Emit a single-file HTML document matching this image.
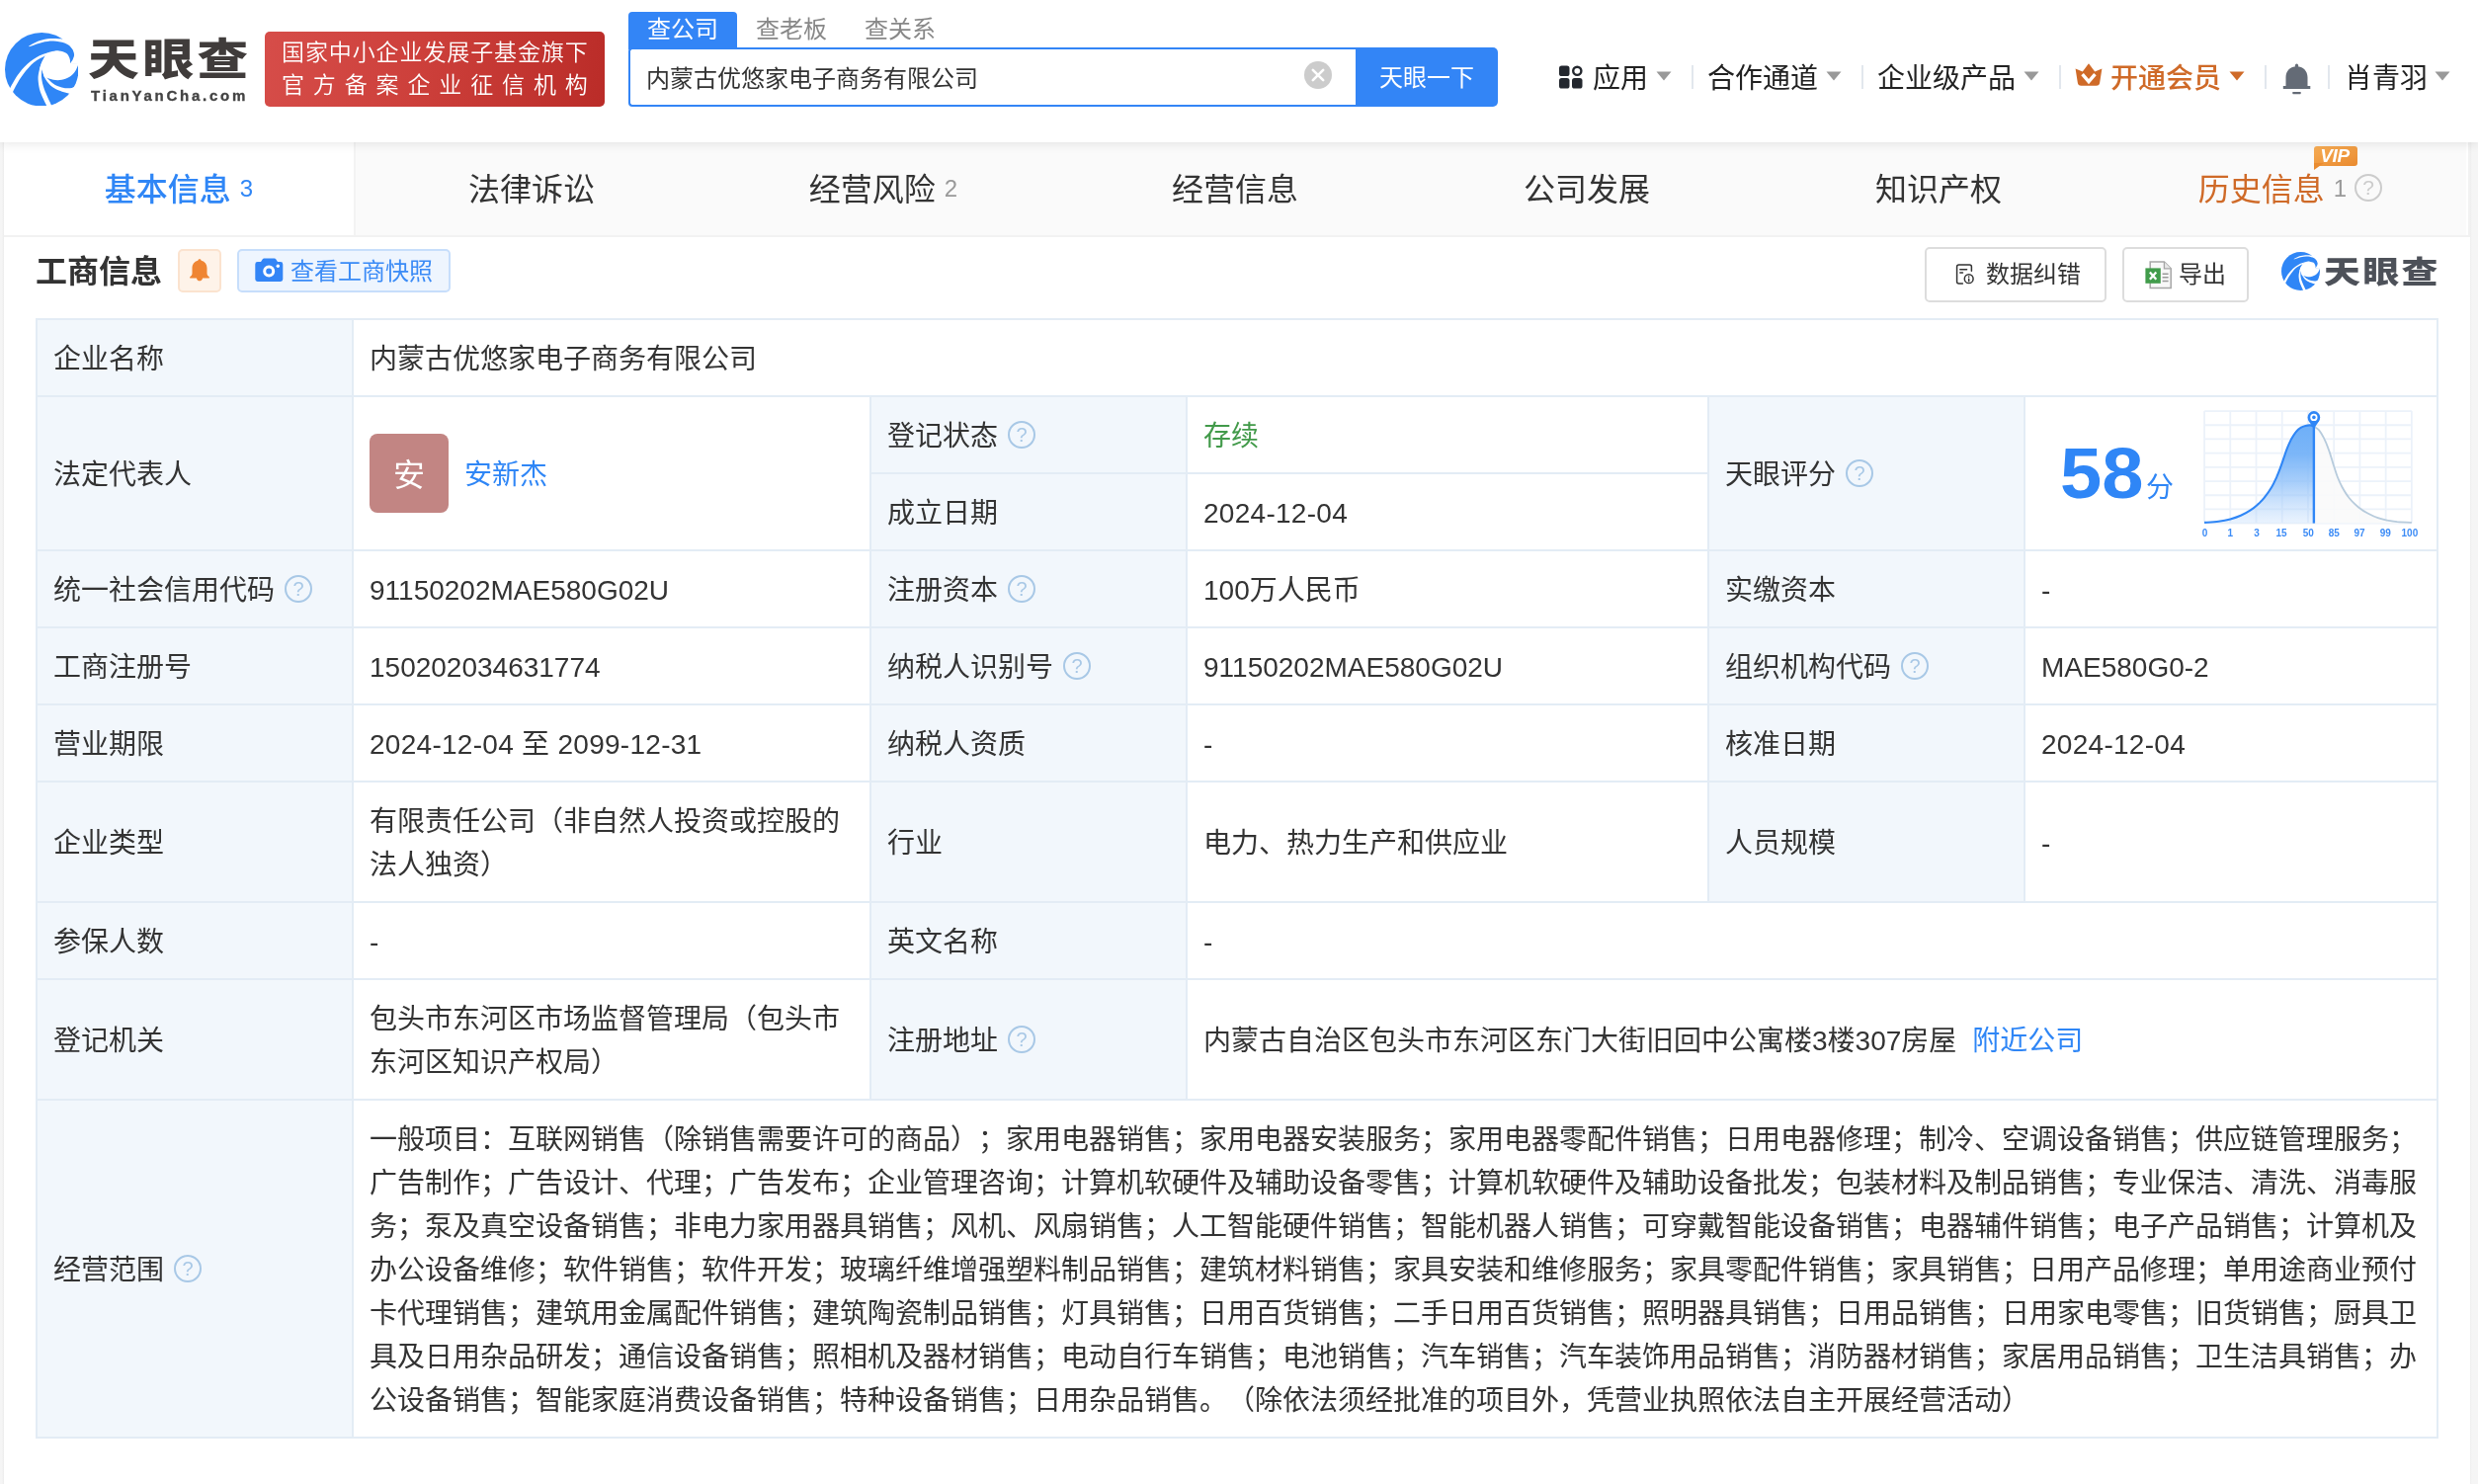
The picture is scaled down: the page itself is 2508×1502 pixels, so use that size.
<!DOCTYPE html>
<html lang="zh-CN">
<head>
<meta charset="utf-8">
<title>内蒙古优悠家电子商务有限公司 - 天眼查</title>
<style>
*{box-sizing:border-box;margin:0;padding:0}
html,body{width:2508px;height:1502px;overflow:hidden;background:#f3f3f3}
body{font-family:"Liberation Sans","Noto Sans CJK SC",sans-serif;color:#333;font-size:28px;text-spacing-trim:space-all;-webkit-font-smoothing:antialiased}
.abs{position:absolute}
#page{will-change:transform;position:relative;width:2508px;height:1502px;overflow:hidden;background:linear-gradient(90deg,#f5f5f5 0,#f5f5f5 2px,#ececec 4px,#fff 4px,#fff 2500px,#eee 2500px,#f5f5f5 2502px,#f5f5f5 100%)}
/* header */
#hdr{position:absolute;left:0;top:0;width:2508px;height:144px;background:#fff;box-shadow:0 2px 10px rgba(0,0,0,.09);z-index:5}
.t{position:absolute;white-space:nowrap;line-height:1}
/* tab bar */
#tabs{position:absolute;left:4px;top:144px;width:2496px;height:96px;background:linear-gradient(90deg,#fafafa 0,#fafafa 2492px,#fff 2492px,#fff 2494px,#f2f2f2 2494px);border-bottom:2px solid #f2f2f2}
#tabs .tab{position:absolute;top:0;height:94px;width:356px;text-align:center;font-size:32px;line-height:96px;color:#333;white-space:nowrap}
#tabs .tab .n{font-size:24px;color:#999;margin-left:9px;position:relative;top:-4px}
#tabs .on{background:#fff;color:#2f86f6;font-weight:500;border-right:2px solid #f3f3f3;height:94px}
#tabs .on .n{color:#2f86f6;font-weight:400}
/* table */
table{position:absolute;left:36px;top:322px;width:2430px;border-collapse:collapse;table-layout:fixed}
td{border:2px solid #e3ecf5;padding:18px 16px 14px;line-height:44px;font-size:28px;vertical-align:middle;color:#333;background:#fff;word-break:break-all}
td.l{background:#f2f7fc;white-space:nowrap}
.q{display:inline-block;width:28px;height:28px;border:2px solid #a8c8e6;border-radius:50%;color:#a8c8e6;font-size:20px;line-height:24px;text-align:center;vertical-align:middle;margin-left:10px;position:relative;top:-4px;font-style:normal;font-family:"Liberation Sans",sans-serif}
a{color:#2f86f6;text-decoration:none}
.nv{top:65px;font-size:28px;line-height:30px;color:#222}
.car{top:72px;width:16px;height:10px}
.sep{top:66px;width:2px;height:24px;background:#e2e7ed}
.q2{display:inline-block;width:28px;height:28px;border:2px solid #ccc;border-radius:50%;color:#ccc;font-size:21px;line-height:24px;text-align:center;vertical-align:middle;margin-left:8px;position:relative;top:-5px;font-weight:400}
.av{display:inline-block;width:80px;height:80px;border-radius:8px;background:#c28583;color:#fff;font-size:32px;line-height:84px;text-align:center;vertical-align:middle;overflow:hidden}
.avn{display:inline-block;vertical-align:middle;margin-left:16px;position:relative;top:2px}
.d{letter-spacing:.28px}
</style>
</head>
<body>
<div id="page">
<svg width="0" height="0" style="position:absolute">
 <defs>
  <symbol id="lg" viewBox="0 0 74.5 74.5">
<circle cx="37.25" cy="37.25" r="37.25" fill="#2f86f6"/>
<g fill="#fff">
<path d="M24.2,13.6C25.9,12.8 31.2,9.6 34.8,8.3C38.5,7.1 42.2,6.4 46.1,6.1C50.0,5.8 56.1,6.4 58.1,6.5L63.1,3.7C65.7,4.2 75.8,1.7 78.4,6.5C80.9,11.3 78.4,28.3 78.4,32.7L66.2,31.0C66.6,30.3 68.1,28.4 68.8,26.9C69.4,25.4 70.3,23.8 70.0,21.8C69.8,19.8 69.0,16.9 67.4,15.0C65.7,13.1 63.3,11.7 60.3,10.6C57.2,9.5 52.7,8.7 49.0,8.6C45.2,8.5 41.7,9.1 37.6,10.0C33.6,11.0 26.7,13.6 24.5,14.3Z"/>
<path d="M40.8,23.0C41.7,22.5 43.8,20.4 46.1,19.6C48.4,18.9 52.0,18.2 54.6,18.4C57.3,18.6 60.2,19.4 62.0,20.7C63.8,21.9 64.7,24.0 65.4,25.8C66.1,27.5 66.1,30.1 66.2,31.0L78.4,31.4C78.4,31.7 78.4,32.7 78.4,33.0L74.0,33.0C73.5,34.1 72.4,37.4 71.0,39.3C69.7,41.2 68.2,43.0 65.9,44.4C63.7,45.8 60.3,47.3 57.5,47.8C54.6,48.4 51.4,48.2 49.0,47.8C46.5,47.5 43.7,46.2 42.6,45.8L39.9,45.1C39.5,43.8 38.2,38.8 37.3,37.5C36.5,36.3 35.2,37.6 34.8,37.6L34.8,37.6C35.2,36.4 36.1,32.7 37.1,30.3C38.1,27.8 40.2,24.2 40.8,23.0Z"/>
<path d="M37.4,29.7C36.8,31.5 34.9,37.3 34.2,40.5C33.6,43.7 33.4,45.7 33.7,49.0C34.0,52.3 34.5,55.9 35.9,60.3C37.4,64.6 41.5,72.5 42.6,75.0L47.4,74.1C46.1,71.4 41.6,62.1 39.9,57.5C38.2,52.8 37.5,49.5 37.1,46.1C36.7,42.7 37.1,39.9 37.6,37.1C38.2,34.2 40.0,30.5 40.5,29.2Z"/>
<path d="M42.6,45.8C43.7,46.8 46.5,50.2 49.0,51.8C51.4,53.4 54.6,54.7 57.5,55.5C60.3,56.2 63.6,56.5 65.9,56.3C68.3,56.1 70.8,54.7 71.7,54.3L67.5,62.4C65.4,61.8 58.2,60.1 54.6,58.6C51.1,57.1 48.6,55.8 46.1,53.5C43.7,51.2 41.3,47.7 39.9,45.0C38.5,42.3 38.0,38.4 37.6,37.1Z"/>
<path d="M4.6,57.5C5.9,55.1 9.5,47.9 12.5,43.6C15.5,39.4 18.9,35.2 22.7,31.8C26.5,28.4 31.2,25.3 35.1,23.3C39.0,21.2 44.3,20.1 46.1,19.4L41.2,23.2C39.2,24.3 32.8,27.2 29.2,30.3C25.5,33.4 21.9,37.8 19.0,41.6C16.0,45.4 13.6,49.5 11.6,52.9C9.6,56.3 7.8,60.5 7.1,62.0Z"/>
</g>
</symbol>
  <symbol id="car" viewBox="0 0 16 10"><path d="M0.5,0.5 L15.5,0.5 L8,9.5Z"/></symbol>
 </defs>
</svg>
<div id="hdr">
 <svg class="abs" style="left:4.8px;top:32.8px" width="74.5" height="74.5"><use href="#lg"/></svg>
 <div class="t" id="lgtxt" style="left:89px;top:39px;font-size:44px;font-weight:900;color:#403c3b;letter-spacing:3px;transform:scaleX(1.175);transform-origin:0 0">天眼查</div>
 <div class="t" id="lgurl" style="left:92px;top:89px;font-size:15px;font-weight:700;color:#444;letter-spacing:2.75px;-webkit-text-stroke:.35px #444">TianYanCha.com</div>
 <div class="abs" style="left:268px;top:32px;width:344px;height:76px;border-radius:5px;background:linear-gradient(100deg,#d64d49 0%,#cd403b 45%,#ba2c28 100%)">
  <div class="t" style="left:17px;top:7px;font-size:23px;line-height:28px;color:#fff;letter-spacing:.9px;font-weight:350">国家中小企业发展子基金旗下</div>
  <div class="t" style="left:17px;top:40px;font-size:23px;line-height:28px;color:#fff;letter-spacing:8.87px;font-weight:350">官方备案企业征信机构</div>
 </div>
 <!-- search tabs -->
 <div class="abs" style="left:636px;top:12px;width:110px;height:38px;background:#3385f6;border-radius:4px 4px 0 0"></div>
 <div class="t" style="left:636px;top:16px;width:110px;text-align:center;font-size:24px;line-height:28px;color:#fff">查公司</div>
 <div class="t" style="left:746px;top:16px;width:110px;text-align:center;font-size:24px;line-height:28px;color:#888">查老板</div>
 <div class="t" style="left:856px;top:16px;width:110px;text-align:center;font-size:24px;line-height:28px;color:#888">查关系</div>
 <!-- search box -->
 <div class="abs" style="left:636px;top:48px;width:740px;height:60px;border:2px solid #3385f6;border-right:0;border-radius:4px 0 0 4px;background:#fff"></div>
 <div class="t" style="left:654px;top:65px;font-size:24px;line-height:30px;color:#333">内蒙古优悠家电子商务有限公司</div>
 <svg class="abs" style="left:1320px;top:62px" width="28" height="28" viewBox="0 0 28 28"><circle cx="14" cy="14" r="14" fill="#ccc"/><path d="M8.8,8.8 L19.2,19.2 M19.2,8.8 L8.8,19.2" stroke="#fff" stroke-width="2.6" stroke-linecap="round"/></svg>
 <div class="abs" style="left:1372px;top:48px;width:144px;height:60px;background:#3385f6;border-radius:0 5px 5px 0"></div>
 <div class="t" style="left:1372px;top:64px;width:144px;text-align:center;font-size:24px;line-height:30px;color:#fff">天眼一下</div>
 <!-- nav -->
 <svg class="abs" style="left:1578px;top:66px" width="24" height="24" viewBox="0 0 24 24"><g fill="#23272e"><rect x="0" y="0.5" width="10.5" height="10.5" rx="2.6"/><rect x="0" y="13" width="10.5" height="10.5" rx="2.6"/><rect x="13" y="13" width="10.5" height="10.5" rx="2.6"/></g><circle cx="18.3" cy="5.8" r="4.1" fill="none" stroke="#23272e" stroke-width="2.4"/></svg>
 <div class="t nv" style="left:1612px">应用</div>
 <svg class="abs car" style="left:1676px" fill="#999"><use href="#car"/></svg>
 <div class="abs sep" style="left:1712px"></div>
 <div class="t nv" style="left:1728px">合作通道</div>
 <svg class="abs car" style="left:1848px" fill="#999"><use href="#car"/></svg>
 <div class="abs sep" style="left:1884px"></div>
 <div class="t nv" style="left:1900px">企业级产品</div>
 <svg class="abs car" style="left:2048px" fill="#999"><use href="#car"/></svg>
 <div class="abs sep" style="left:2084px"></div>
 <svg class="abs" style="left:2100px;top:64.4px" width="28" height="24" viewBox="0 0 28 24"><path fill="#cf6a28" d="M0.6,5.6 L7.8,8.4 L14,0.3 L20.2,8.4 L27.4,5.6 L25.2,19.6 Q24.8,22.8 21.6,22.8 L6.4,22.8 Q3.2,22.8 2.8,19.6 Z"/><path d="M7.6,11.2 L14,18.6 L20.4,11.2" fill="none" stroke="#fff" stroke-width="3.4"/></svg>
 <div class="t nv" style="left:2136px;color:#cf6a28;font-weight:500">开通会员</div>
 <svg class="abs car" style="left:2256px" fill="#cf6a28"><use href="#car"/></svg>
 <div class="abs sep" style="left:2292px"></div>
 <svg class="abs" style="left:2310px;top:64px" width="30" height="32" viewBox="0 0 30 32"><g fill="#646b76"><path d="M3.5,23 L3.5,14.3 C3.5,7.6 8,3.2 14.5,3.2 C21,3.2 25.5,7.6 25.5,14.3 L25.5,23 L28.3,23 L28.3,26 L0.8,26 L0.8,23Z"/><path d="M12.9,5 L12.9,2.2 Q12.9,0.6 14.5,0.6 Q16.1,0.6 16.1,2.2 L16.1,5Z"/><rect x="10.3" y="29" width="8.4" height="2.2" rx=".6"/></g></svg>
 <div class="abs sep" style="left:2356px"></div>
 <div class="t nv" style="left:2373px">肖青羽</div>
 <svg class="abs car" style="left:2464px" fill="#999"><use href="#car"/></svg>
</div>

<div id="tabs">
 <div class="tab on" style="left:0">基本信息<span class="n">3</span></div>
 <div class="tab" style="left:356px">法律诉讼</div>
 <div class="tab" style="left:712px">经营风险<span class="n">2</span></div>
 <div class="tab" style="left:1068px">经营信息</div>
 <div class="tab" style="left:1424px">公司发展</div>
 <div class="tab" style="left:1780px">知识产权</div>
 <div class="tab" style="left:2136px;color:#cf6a28">历史信息<span class="n">1</span><span class="q2">?</span></div>
 <div class="abs" id="vip" style="left:2338px;top:4px;width:44px;height:20px;border-radius:3px;background:linear-gradient(160deg,#f7ad55,#e98a2f)"></div>
 <div class="abs" style="left:2338px;top:21px;width:0;height:0;border-top:7px solid #ea8c31;border-right:10px solid transparent"></div>
 <div class="t" style="left:2337px;top:4px;width:44px;text-align:center;font-size:19px;line-height:20px;font-weight:700;font-style:italic;color:#fff;letter-spacing:-.3px">VIP</div>
</div>

<div class="t" style="left:36px;top:255px;font-size:32px;line-height:40px;font-weight:700;color:#333">工商信息</div>
<div class="abs" style="left:180px;top:252px;width:44px;height:44px;border:2px solid #fbe3cf;border-radius:5px;background:#fef3e9"></div>
<svg class="abs" style="left:192px;top:261.6px" width="20" height="23" viewBox="0 0 20 23"><path fill="#ef8533" d="M10,0.3 C11,0.3 11.6,0.9 11.7,1.8 C15.6,2.8 17.5,5.8 17.5,9.6 L17.5,14.6 C17.5,16.4 18.4,17.4 19.8,18.2 L19.8,19.4 L13,19.4 C12.8,21.2 11.6,22.3 10,22.3 C8.4,22.3 7.2,21.2 7,19.4 L0.2,19.4 L0.2,18.2 C1.6,17.4 2.5,16.4 2.5,14.6 L2.5,9.6 C2.5,5.8 4.4,2.8 8.3,1.8 C8.4,0.9 9,0.3 10,0.3Z"/></svg>
<div class="abs" style="left:240px;top:252px;width:216px;height:44px;border:2px solid #c7defb;border-radius:5px;background:#eef5fe"></div>
<svg class="abs" style="left:257.7px;top:260.8px" width="29" height="25" viewBox="0 0 29 25"><path fill="#3385f6" d="M2.7,4 L6,4 L8,1 Q8.4,0.4 9.2,0.4 L19.8,0.4 Q20.6,0.4 21,1 L23,4 L25.9,4 Q28.3,4 28.3,6.4 L28.3,21.6 Q28.3,24 25.9,24 L2.7,24 Q0.3,24 0.3,21.6 L0.3,6.4 Q0.3,4 2.7,4Z"/><circle cx="14.2" cy="13.5" r="4.5" fill="none" stroke="#fff" stroke-width="3"/><circle cx="23.3" cy="8.2" r="1.7" fill="#fff"/></svg>
<div class="t" style="left:294px;top:260px;font-size:24px;line-height:30px;color:#3b8bf6">查看工商快照</div>
<div class="abs" style="left:1948px;top:250px;width:184px;height:56px;border:2px solid #ddd;border-radius:5px;background:#fff"></div>
<svg class="abs" style="left:1978px;top:266px" width="22" height="24" viewBox="0 0 22 24"><g fill="none" stroke="#333" stroke-width="1.5" stroke-linecap="round"><path d="M17.4,8.2 L17.4,4 Q17.4,2 15.4,2 L4.6,2 Q2.6,2 2.6,4 L2.6,19 Q2.6,21 4.6,21 L8.4,21"/><path d="M5.8,6.7 L12.6,6.7 M5.8,9.9 L8.5,9.9"/><circle cx="14.7" cy="16.2" r="4.4"/><path d="M14.7,14.1 L14.7,14.3 M14.7,16.3 L14.7,18.4"/></g></svg>
<div class="t" style="left:2010px;top:263px;font-size:24px;line-height:30px;color:#333">数据纠错</div>
<div class="abs" style="left:2148px;top:250px;width:128px;height:56px;border:2px solid #ddd;border-radius:5px;background:#fff"></div>
<svg class="abs" style="left:2170.8px;top:263.8px" width="28" height="29" viewBox="0 0 28 29"><path d="M5.2,1 L19.4,1 L26.2,7.8 L26.2,27.4 L5.2,27.4Z" fill="#f8f8f8" stroke="#a6a6a6" stroke-width="1.5"/><path d="M19.4,1 L19.4,7.8 L26.2,7.8" fill="#e6e6e6" stroke="#a6a6a6" stroke-width="1.3"/><path d="M17.6,13.2 L23.6,13.2 M17.6,16.8 L23.6,16.8 M17.6,20.4 L23.6,20.4" stroke="#9a9a9a" stroke-width="1.5"/><rect x="0.4" y="7.4" width="15.4" height="15.4" fill="#419c4b"/><path d="M4.9,11.4 L11.3,18.8 M11.3,11.4 L4.9,18.8" stroke="#fff" stroke-width="2.3"/></svg>
<div class="t" style="left:2205px;top:263px;font-size:24px;line-height:30px;color:#333">导出</div>
<svg class="abs" style="left:2309px;top:254.5px" width="39" height="39"><use href="#lg"/></svg>
<div class="t" id="lgtxt2" style="left:2352px;top:260px;font-size:31px;font-weight:900;color:#4d5159;letter-spacing:2px;transform:scaleX(1.19);transform-origin:0 0">天眼查</div>

<table>
<colgroup><col style="width:320px"><col style="width:524px"><col style="width:320px"><col style="width:528px"><col style="width:320px"><col style="width:418px"></colgroup>
<tr><td class="l">企业名称</td><td colspan="5">内蒙古优悠家电子商务有限公司</td></tr>
<tr><td class="l" rowspan="2">法定代表人</td><td rowspan="2" style="padding-top:0;padding-bottom:0"><span class="av">安</span><a class="avn">安新杰</a></td><td class="l">登记状态<i class="q">?</i></td><td style="color:#429a4a">存续</td><td class="l" rowspan="2">天眼评分<i class="q">?</i></td><td rowspan="2" style="padding:0;position:relative"><div style="height:152px"></div></td></tr>
<tr><td class="l">成立日期</td><td><span class="d">2024-12-04</span></td></tr>
<tr><td class="l">统一社会信用代码<i class="q">?</i></td><td>91150202MAE580G02U</td><td class="l">注册资本<i class="q">?</i></td><td>100万人民币</td><td class="l">实缴资本</td><td>-</td></tr>
<tr><td class="l">工商注册号</td><td>150202034631774</td><td class="l">纳税人识别号<i class="q">?</i></td><td>91150202MAE580G02U</td><td class="l">组织机构代码<i class="q">?</i></td><td>MAE580G0-2</td></tr>
<tr><td class="l">营业期限</td><td><span class="d">2024-12-04 至 2099-12-31</span></td><td class="l">纳税人资质</td><td>-</td><td class="l">核准日期</td><td><span class="d">2024-12-04</span></td></tr>
<tr><td class="l">企业类型</td><td>有限责任公司（非自然人投资或控股的<br>法人独资）</td><td class="l">行业</td><td>电力、热力生产和供应业</td><td class="l">人员规模</td><td>-</td></tr>
<tr><td class="l">参保人数</td><td>-</td><td class="l">英文名称</td><td colspan="3">-</td></tr>
<tr><td class="l">登记机关</td><td>包头市东河区市场监督管理局（包头市<br>东河区知识产权局）</td><td class="l">注册地址<i class="q">?</i></td><td colspan="3">内蒙古自治区包头市东河区东门大街旧回中公寓楼3楼307房屋<a style="margin-left:16px">附近公司</a></td></tr>
<tr><td class="l">经营范围<i class="q">?</i></td><td colspan="5" style="white-space:nowrap">一般项目：互联网销售（除销售需要许可的商品）；家用电器销售；家用电器安装服务；家用电器零配件销售；日用电器修理；制冷、空调设备销售；供应链管理服务；<br>广告制作；广告设计、代理；广告发布；企业管理咨询；计算机软硬件及辅助设备零售；计算机软硬件及辅助设备批发；包装材料及制品销售；专业保洁、清洗、消毒服<br>务；泵及真空设备销售；非电力家用器具销售；风机、风扇销售；人工智能硬件销售；智能机器人销售；可穿戴智能设备销售；电器辅件销售；电子产品销售；计算机及<br>办公设备维修；软件销售；软件开发；玻璃纤维增强塑料制品销售；建筑材料销售；家具安装和维修服务；家具零配件销售；家具销售；日用产品修理；单用途商业预付<br>卡代理销售；建筑用金属配件销售；建筑陶瓷制品销售；灯具销售；日用百货销售；二手日用百货销售；照明器具销售；日用品销售；日用家电零售；旧货销售；厨具卫<br>具及日用杂品研发；通信设备销售；照相机及器材销售；电动自行车销售；电池销售；汽车销售；汽车装饰用品销售；消防器材销售；家居用品销售；卫生洁具销售；办<br>公设备销售；智能家庭消费设备销售；特种设备销售；日用杂品销售。（除依法须经批准的项目外，凭营业执照依法自主开展经营活动）</td></tr>
</table>
<div class="t" style="left:2085px;top:443px;font-size:72px;line-height:72px;font-weight:700;color:#2f86f6;font-family:'Liberation Sans',sans-serif;transform:scaleX(1.055);transform-origin:0 0">58</div>
<div class="t" style="left:2172px;top:476px;font-size:28px;line-height:36px;color:#2f86f6">分</div>
<svg class="abs" style="left:2222.7px;top:410.6px" width="250" height="146" viewBox="0 0 250 146">
<defs><linearGradient id="cg" gradientUnits="userSpaceOnUse" x1="0" y1="19.4" x2="0" y2="118.6"><stop offset="0" stop-color="#6eaff8"/><stop offset=".3" stop-color="#78b4f8" stop-opacity=".97"/><stop offset=".6" stop-color="#8ec0f9" stop-opacity=".75"/><stop offset="1" stop-color="#b9d7fb" stop-opacity=".3"/></linearGradient></defs>
<path d="M8.07,5.07 V118.62 M8.07,5.07 H217.88 M34.29,5.07 V118.62 M8.07,19.26 H217.88 M60.52,5.07 V118.62 M8.07,33.45 H217.88 M86.74,5.07 V118.62 M8.07,47.65 H217.88 M112.97,5.07 V118.62 M8.07,61.84 H217.88 M139.20,5.07 V118.62 M8.07,76.04 H217.88 M165.42,5.07 V118.62 M8.07,90.23 H217.88 M191.65,5.07 V118.62 M8.07,104.43 H217.88 M217.88,5.07 V118.62 M8.07,118.62 H217.88" stroke="#ecf2fa" stroke-width="1.8" fill="none"/>
<path d="M118.9,20.6C119.7,21.2 122.4,22.4 124.1,24.3C125.7,26.2 127.3,28.9 128.9,32.1C130.6,35.4 132.2,39.3 133.8,43.9C135.5,48.4 137.3,54.9 138.7,59.5C140.2,64.1 141.2,67.5 142.6,71.2C144.1,75.0 145.6,78.4 147.5,82.0C149.5,85.6 151.6,89.3 154.4,92.7C157.1,96.1 160.9,99.8 164.1,102.5C167.4,105.2 170.6,107.1 173.9,108.8C177.2,110.6 180.4,112.1 183.7,113.2C186.9,114.4 190.2,115.0 193.4,115.7C196.7,116.3 199.1,116.8 203.2,117.2C207.3,117.5 215.4,117.8 217.9,117.9 L217.9,118.6 L118.9,118.6 Z" fill="#f9f9f9" fill-opacity=".88"/>
<path d="M118.9,20.6C119.7,21.2 122.4,22.4 124.1,24.3C125.7,26.2 127.3,28.9 128.9,32.1C130.6,35.4 132.2,39.3 133.8,43.9C135.5,48.4 137.3,54.9 138.7,59.5C140.2,64.1 141.2,67.5 142.6,71.2C144.1,75.0 145.6,78.4 147.5,82.0C149.5,85.6 151.6,89.3 154.4,92.7C157.1,96.1 160.9,99.8 164.1,102.5C167.4,105.2 170.6,107.1 173.9,108.8C177.2,110.6 180.4,112.1 183.7,113.2C186.9,114.4 190.2,115.0 193.4,115.7C196.7,116.3 199.1,116.8 203.2,117.2C207.3,117.5 215.4,117.8 217.9,117.9" fill="none" stroke="#b7cbdc" stroke-width="1.8"/>
<path d="M8.1,117.9C10.5,117.7 18.1,117.3 22.4,116.7C26.8,116.1 30.5,115.4 34.3,114.4C38.0,113.4 41.5,112.3 44.9,110.8C48.3,109.3 52.1,107.1 54.7,105.4C57.3,103.8 58.3,103.1 60.5,101.0C62.8,99.0 65.8,96.4 68.4,93.2C71.0,90.0 74.1,85.5 76.2,82.0C78.3,78.5 79.6,75.5 81.1,72.2C82.5,68.9 83.8,65.7 85.0,62.4C86.2,59.2 87.3,55.9 88.4,52.7C89.5,49.4 90.6,46.0 91.8,42.9C93.0,39.8 94.3,36.9 95.7,34.1C97.2,31.3 99.0,28.3 100.6,26.3C102.2,24.2 103.9,22.9 105.5,21.9C107.1,20.8 108.8,20.3 110.4,19.9C112.0,19.5 113.9,19.3 115.3,19.4C116.7,19.5 118.3,20.4 118.9,20.6 L118.9,118.6 L8.1,118.6 Z" fill="url(#cg)"/>
<path d="M8.1,117.9C10.5,117.7 18.1,117.3 22.4,116.7C26.8,116.1 30.5,115.4 34.3,114.4C38.0,113.4 41.5,112.3 44.9,110.8C48.3,109.3 52.1,107.1 54.7,105.4C57.3,103.8 58.3,103.1 60.5,101.0C62.8,99.0 65.8,96.4 68.4,93.2C71.0,90.0 74.1,85.5 76.2,82.0C78.3,78.5 79.6,75.5 81.1,72.2C82.5,68.9 83.8,65.7 85.0,62.4C86.2,59.2 87.3,55.9 88.4,52.7C89.5,49.4 90.6,46.0 91.8,42.9C93.0,39.8 94.3,36.9 95.7,34.1C97.2,31.3 99.0,28.3 100.6,26.3C102.2,24.2 103.9,22.9 105.5,21.9C107.1,20.8 108.8,20.3 110.4,19.9C112.0,19.5 113.9,19.3 115.3,19.4C116.7,19.5 118.3,20.4 118.9,20.6" fill="none" stroke="#2f86f6" stroke-width="2.1"/>
<path d="M118.88,17.5 V118.6" stroke="#2f86f6" stroke-width="2.4"/>
<path d="M113.3,14.6 L124.5,14.6 L118.9,22.9 Z" fill="#2f86f6"/>
<circle cx="118.9" cy="11.4" r="5" fill="#fff" stroke="#2f86f6" stroke-width="2.7"/>
<circle cx="118.9" cy="11.4" r="1.8" fill="#2f86f6"/>
<g font-family="'Liberation Sans',sans-serif" font-size="10" font-weight="700" fill="#3d8cf6" text-anchor="middle">
<text x="8.5" y="132.3">0</text>
<text x="34.3" y="132.3">1</text>
<text x="61.0" y="132.3">3</text>
<text x="86.0" y="132.3">15</text>
<text x="113.3" y="132.3">50</text>
<text x="139.2" y="132.3">85</text>
<text x="165.1" y="132.3">97</text>
<text x="191.3" y="132.3">99</text>
<text x="215.9" y="132.3">100</text>
</g></svg>

</div>
</body>
</html>
